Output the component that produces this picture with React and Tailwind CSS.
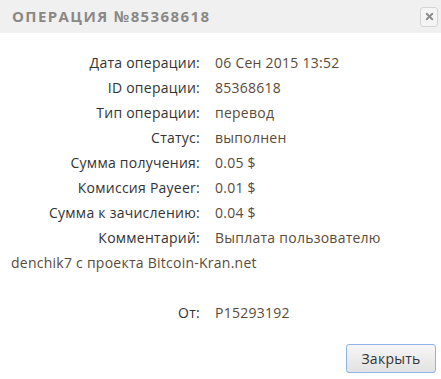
import { X } from 'lucide-react';

const rows = [
  ['Дата операции:', '06 Сен 2015 13:52'],
  ['ID операции:', '85368618'],
  ['Тип операции:', 'перевод'],
  ['Статус:', 'выполнен'],
  ['Сумма получения:', '0.05 $'],
  ['Комиссия Payeer:', '0.01 $'],
  ['Сумма к зачислению:', '0.04 $'],
];

const Label = ({ children }) => (
  <span className="inline-block w-[189px] text-right mr-[15px] text-[#333]">{children}</span>
);

export default function App() {
  return (
    <div className="w-[441px] h-[379px] bg-white flex flex-col font-['Open_Sans',sans-serif] text-[14px] tracking-[0.25px]">
      <div className="h-[33px] bg-[#f0f0f0] flex items-center justify-between pl-[12px] pr-[3px]">
        <span className="text-[#8a8884] font-bold text-[15px] tracking-[1.4px]">ОПЕРАЦИЯ №85368618</span>
        <button className="w-[18px] h-[20px] border border-[#d4d4d4] rounded-[3px] bg-[#f4f4f4] flex items-center justify-center">
          <X size={11} strokeWidth={4} className="text-[#8a8a8a]" />
        </button>
      </div>
      <div className="pl-[11px] pr-[10px] pt-[17px] leading-[25px] text-[#5a4a3a]">
        {rows.map(([l, v]) => (
          <div key={l}>
            <Label>{l}</Label>
            <span>{v}</span>
          </div>
        ))}
        <p>
          <Label>Комментарий:</Label>
          Выплата пользователю denchik7 с проекта Bitcoin-Kran.net
        </p>
        <div className="mt-[25px]">
          <Label>От:</Label>
          <span>P15293192</span>
        </div>
      </div>
      <div className="flex justify-end pr-[5px] mt-auto mb-[6px]">
        <button className="w-[90px] h-[29px] rounded-[3px] border border-[#8fb2e8] bg-gradient-to-b from-[#f6f6f6] to-[#e2e2e2] text-[#333] text-[14px]">
          Закрыть
        </button>
      </div>
    </div>
  );
}
